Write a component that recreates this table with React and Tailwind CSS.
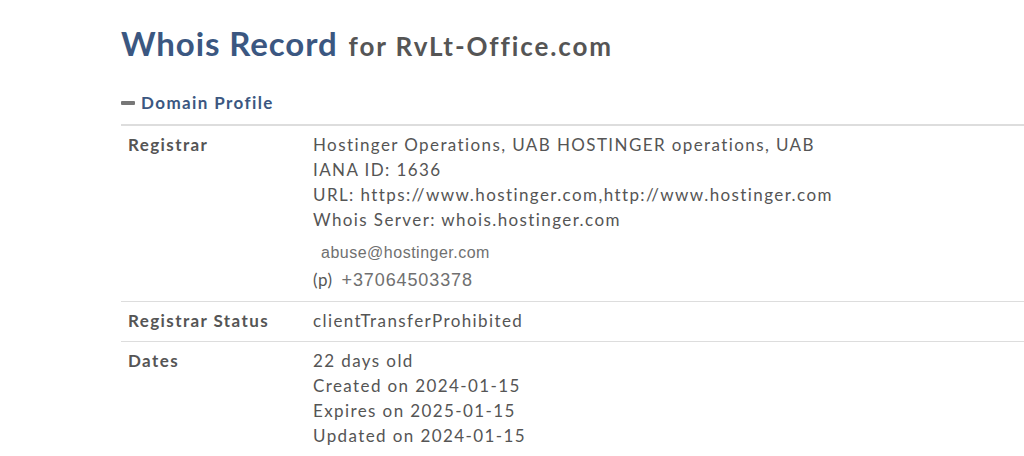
import React from 'react'

const ROWS = [
  {
    label: 'Registrar',
    lines: [
      'Hostinger Operations, UAB HOSTINGER operations, UAB',
      'IANA ID: 1636',
      'URL: https://www.hostinger.com,http://www.hostinger.com',
      'Whois Server: whois.hostinger.com',
    ],
    contact: true,
  },
  { label: 'Registrar Status', lines: ['clientTransferProhibited'] },
  {
    label: 'Dates',
    lines: ['22 days old', 'Created on 2024-01-15', 'Expires on 2025-01-15', 'Updated on 2024-01-15'],
  },
]

export default function App() {
  return (
    <div className="w-[1024px] h-[456px] overflow-hidden bg-white font-['Lato',sans-serif] text-[#555]">
      <div className="pl-[121px] pt-[27px]">
        <h1 className="flex items-baseline gap-[11px] leading-none">
          <span className="text-[33px] font-bold text-[#3b5781] tracking-[0.9px]">Whois Record</span>
          <span className="text-[26px] font-bold text-[#555] tracking-[1.9px]">for RvLt-Office.com</span>
        </h1>

        <div className="mt-[30px] flex items-center gap-[6px] text-[17px] font-bold text-[#3b5781] tracking-[1.4px]">
          <span className="w-[14px] h-[4px] bg-[#777] rounded-[1px]" />
          Domain Profile
        </div>

        <div className="mt-[8px] w-[1000px] border-t-2 border-[#ddd]">
          {ROWS.map(row => (
            <div key={row.label} className="flex border-b border-[#ddd] pt-[6px] pb-[8px] text-[17px] leading-[25px] tracking-[1.4px]">
              <div className="w-[192px] pl-[7px] font-bold text-[#555]">{row.label}</div>
              <div className="flex-1">
                {row.lines.map(l => (
                  <div key={l}>{l}</div>
                ))}
                {row.contact && (
                  <>
                    <div className="pl-[8px] pt-[11px] font-['Liberation_Sans',sans-serif] text-[16px] leading-[20px] tracking-[0.5px] text-[#707070]">
                      abuse@hostinger.com
                    </div>
                    <div className="mt-[4px] flex items-baseline leading-[26px]">
                      <span className="tracking-[0.5px]">(p)</span>
                      <span className="ml-[9px] font-['Liberation_Sans',sans-serif] text-[18px] tracking-[0.9px] text-[#707070]">+37064503378</span>
                    </div>
                  </>
                )}
              </div>
            </div>
          ))}
        </div>
      </div>
    </div>
  )
}
